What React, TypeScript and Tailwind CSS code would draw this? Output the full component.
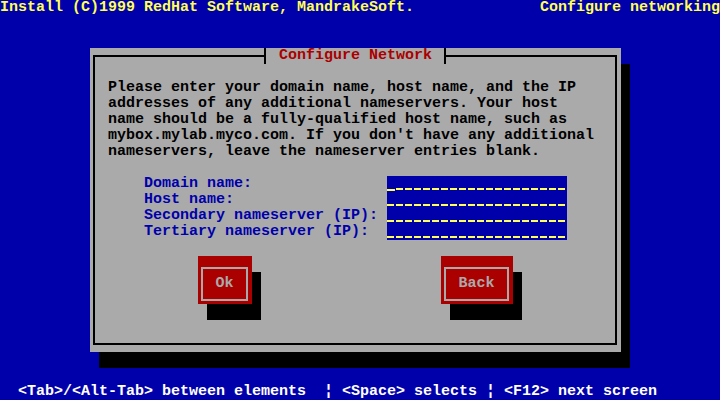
export default function App() {
  const paragraph = [
    "Please enter your domain name, host name, and the IP",
    "addresses of any additional nameservers. Your host",
    "name should be a fully-qualified host name, such as",
    "mybox.mylab.myco.com. If you don't have any additional",
    "nameservers, leave the nameserver entries blank.",
  ];

  const fields = [
    "Domain name:",
    "Host name:",
    "Secondary nameserver (IP):",
    "Tertiary nameserver (IP):",
  ];

  return (
    <div className="w-[720px] h-[400px] overflow-hidden whitespace-pre bg-[#0000aa] font-['Liberation_Mono','DejaVu_Sans_Mono',monospace] text-[15px] leading-4 font-bold">
      {/* top status line */}
      <div className="flex h-4 justify-between text-[#ffff55]">
        <span>Install (C)1999 RedHat Software, MandrakeSoft.</span>
        <span>Configure networking</span>
      </div>

      <div className="h-8" />

      {/* dialog window */}
      <div className="ml-[90px] h-[304px] w-[531px] bg-[#aaaaaa] pt-[7px] pb-[7px] pl-[3px] pr-[4px] shadow-[9px_16px_0_#000]">
        <div className="relative h-full border-2 border-black pl-[13px] pt-[23px]">
          <div className="absolute left-[169px] top-[-9px] h-4 w-[182px] border-x-2 border-black bg-[#aaaaaa] pl-[13px] pr-[12px] text-[#aa0000]">
            Configure Network
          </div>

          <div className="text-black">
            {paragraph.map((line) => (
              <div key={line} className="h-4">
                {line}
              </div>
            ))}
          </div>

          <div className="mt-4 ml-9">
            {fields.map((label, i) => (
              <div key={label} className="flex h-4">
                <span className="w-[243px] text-[#0000aa]">{label}</span>
                <span className="flex h-4 w-[180px] bg-[#0000aa]">
                  {Array.from({ length: 20 }).map((_, j) =>
                    i === 0 && j === 0 ? (
                      <span key={j} className="flex h-4 w-[9px] items-end pb-px">
                        <span className="h-[2px] w-[8px] bg-[#ffff55]" />
                      </span>
                    ) : (
                      <span key={j} className="flex h-4 w-[9px] items-end pb-[2px]">
                        <span className="h-[2px] w-[7px] bg-[#ffff55]" />
                      </span>
                    )
                  )}
                </span>
              </div>
            ))}
          </div>

          <div className="mt-4 ml-[90px] flex">
            <button className="h-12 w-[54px] bg-[#aa0000] pt-[7px] pl-[3px] pr-[4px] shadow-[9px_16px_0_#000]">
              <span className="flex h-[34px] items-center justify-center border-2 border-[#aaaaaa] text-[#aaaaaa]">
                Ok
              </span>
            </button>
            <button className="ml-[189px] h-12 w-[72px] bg-[#aa0000] pt-[7px] pl-[3px] pr-[4px] shadow-[9px_16px_0_#000]">
              <span className="flex h-[34px] items-center justify-center border-2 border-[#aaaaaa] text-[#aaaaaa]">
                Back
              </span>
            </button>
          </div>
        </div>
      </div>

      <div className="h-8" />

      {/* help line */}
      <div className="h-4 text-white">
        {"  <Tab>/<Alt-Tab> between elements  ¦ <Space> selects ¦ <F12> next screen"}
      </div>
    </div>
  );
}
